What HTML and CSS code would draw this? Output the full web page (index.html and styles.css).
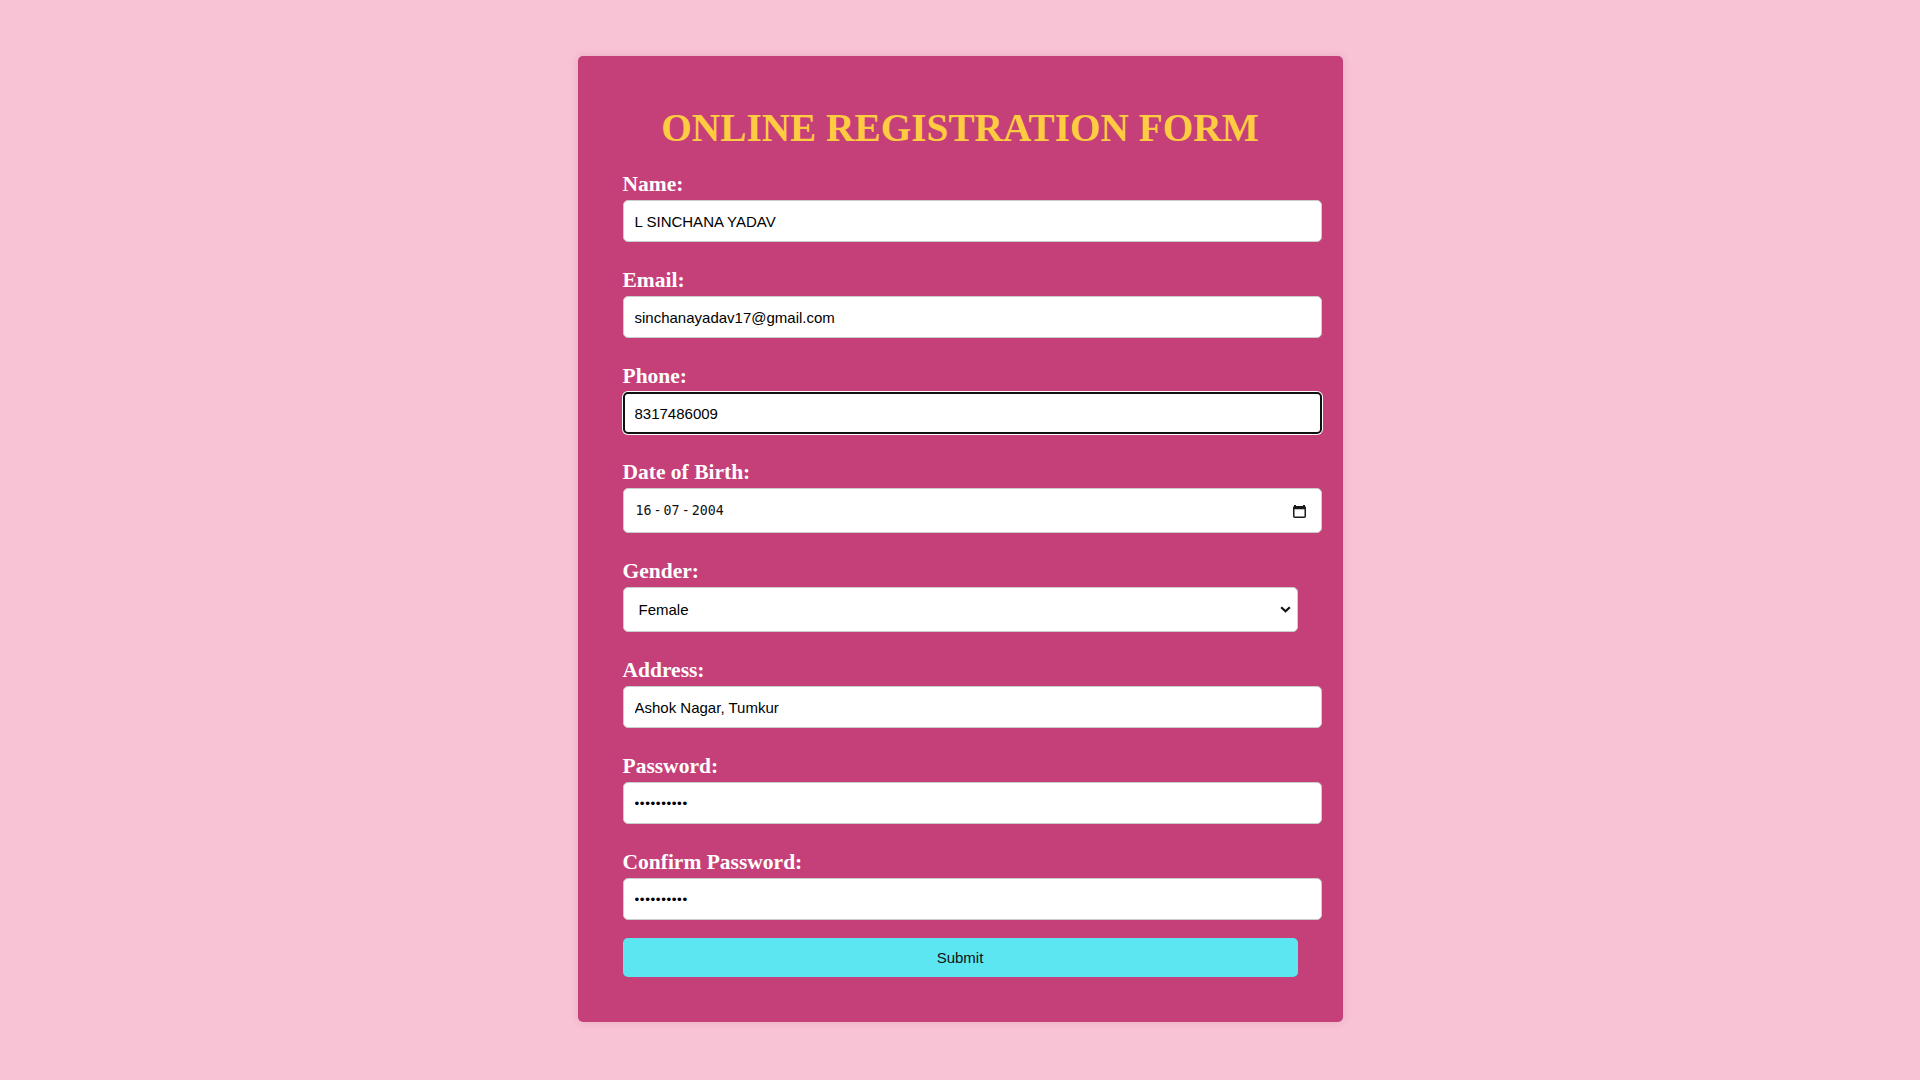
FILE: index.html
```html
<!DOCTYPE html>
<html lang="en">
<head>
<meta charset="utf-8">
<title>Online Registration Form</title>
<link rel="stylesheet" href="styles.css">
</head>
<body>
<main class="card">
  <h1 class="title">ONLINE REGISTRATION FORM</h1>
  <form class="form">
    <div class="field">
      <label class="label" for="name">Name:</label>
      <input class="input" id="name" type="text" value="L SINCHANA YADAV">
    </div>
    <div class="field">
      <label class="label" for="email">Email:</label>
      <input class="input" id="email" type="text" value="sinchanayadav17@gmail.com">
    </div>
    <div class="field">
      <label class="label" for="phone">Phone:</label>
      <input class="input is-focused" id="phone" type="text" value="8317486009">
    </div>
    <div class="field">
      <label class="label" for="dob">Date of Birth:</label>
      <div class="input date" id="dob">
        <span class="date-text"><span>16</span><span class="sep">-</span><span>07</span><span class="sep">-</span><span>2004</span></span>
        <svg class="cal-icon" width="13" height="14" viewBox="0 0 13 14" aria-hidden="true">
          <rect x="1" y="1" width="2" height="2" fill="#1a1a1a"/>
          <rect x="10" y="1" width="2" height="2" fill="#1a1a1a"/>
          <rect x="0.75" y="2.75" width="11.5" height="10.5" rx="1" fill="none" stroke="#1a1a1a" stroke-width="1.5"/>
          <rect x="0.75" y="2.75" width="11.5" height="2.5" fill="#1a1a1a"/>
        </svg>
      </div>
    </div>
    <div class="field">
      <label class="label" for="gender">Gender:</label>
      <div class="select-wrap">
        <select class="input select" id="gender">
          <option>Male</option>
          <option selected>Female</option>
          <option>Other</option>
        </select>
        <svg class="chevron" width="11" height="7" viewBox="0 0 11 7" aria-hidden="true">
          <path d="M1.2 1.2 L5.5 5.3 L9.8 1.2" fill="none" stroke="#111" stroke-width="2.2"/>
        </svg>
      </div>
    </div>
    <div class="field">
      <label class="label" for="address">Address:</label>
      <input class="input" id="address" type="text" value="Ashok Nagar, Tumkur">
    </div>
    <div class="field">
      <label class="label" for="password">Password:</label>
      <input class="input pw" id="password" type="password" value="abcdefghij">
    </div>
    <div class="field field-last">
      <label class="label" for="confirm">Confirm Password:</label>
      <input class="input pw" id="confirm" type="password" value="abcdefghij">
    </div>
    <button class="submit" type="button">Submit</button>
  </form>
</main>
</body>
</html>
```
FILE: styles.css
```css
html, body {
  margin: 0;
}

body {
  background: #f8c3d5;
  display: flex;
  justify-content: center;
  align-items: flex-start;
  padding-top: 56px;
  min-height: 100vh;
  box-sizing: border-box;
  font-family: "Liberation Serif", "Times New Roman", serif;
}

.card {
  width: 765px;
  box-sizing: border-box;
  background: #c54079;
  padding: 20px 45px 45px;
  border-radius: 5px;
  box-shadow: 0 0 8px rgba(120, 20, 60, 0.12);
}

.title {
  margin: 30px 0 22px;
  font-family: "Liberation Serif", "Times New Roman", serif;
  font-weight: bold;
  font-size: 39.3px;
  line-height: 44px;
  color: #ffcb40;
  text-align: center;
}

.form {
  display: flex;
  flex-direction: column;
  margin: 0;
}

.field {
  display: flex;
  flex-direction: column;
  align-items: flex-start;
  margin-bottom: 26px;
}

.field-last {
  margin-bottom: 18px;
}

.label {
  font-family: "Liberation Serif", "Times New Roman", serif;
  font-weight: bold;
  font-size: 21.5px;
  line-height: 24px;
  color: #ffffff;
  margin-bottom: 4px;
}

.input {
  width: 699px;
  height: 42px;
  box-sizing: border-box;
  padding: 0 11px;
  margin: 0;
  border: 1px solid #cccccc;
  border-radius: 5px;
  background: #ffffff;
  font-family: "Liberation Sans", Arial, sans-serif;
  font-size: 15px;
  color: #000000;
  outline: none;
}

.is-focused {
  border: 2px solid #101010;
  padding: 0 10px;
  box-shadow: 0 0 0 1px #ffffff;
}

.pw {
  font-size: 13.5px;
  letter-spacing: 0.6px;
}

.date {
  height: 45px;
  display: flex;
  align-items: center;
  justify-content: space-between;
  padding: 0 15px 0 12px;
  font-family: "DejaVu Sans Mono", "Liberation Mono", monospace;
  font-size: 13.33px;
  color: #111111;
}

.date-text {
  display: flex;
}

.sep {
  margin: 0 2px;
}

.cal-icon {
  display: block;
  margin-top: 1px;
}

.select-wrap {
  position: relative;
  width: 675px;
}

.select {
  width: 675px;
  height: 45px;
  padding: 0 15px;
  appearance: none;
  -webkit-appearance: none;
  color: #000000;
}

.chevron {
  position: absolute;
  right: 7px;
  top: 19px;
}

.submit {
  width: 675px;
  height: 39px;
  box-sizing: border-box;
  border: none;
  border-radius: 5px;
  background: #5ce6f2;
  font-family: "Liberation Sans", Arial, sans-serif;
  font-size: 15px;
  color: #111111;
  cursor: pointer;
  padding: 0;
}
```
